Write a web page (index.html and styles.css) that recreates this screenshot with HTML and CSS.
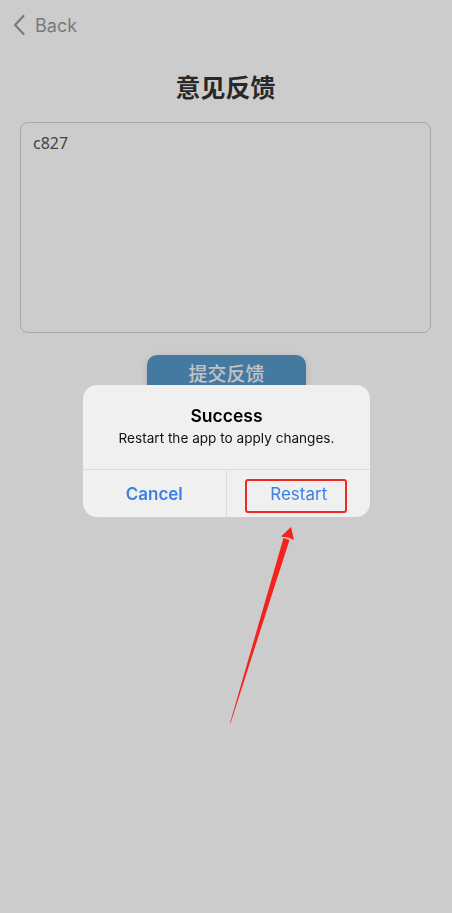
FILE: index.html
```html
<!DOCTYPE html>
<html lang="zh">
<head>
  <meta charset="UTF-8">
  <title>意见反馈</title>
  <link rel="stylesheet" href="styles.css">
</head>
<body>

<div class="page">
  <div class="nav">
    <svg class="nav-chevron" width="14" height="22" viewBox="0 0 14 22">
      <path d="M11.5 2 L3 11 L11.5 20" fill="none" stroke="#999" stroke-width="2.2" stroke-linecap="round" stroke-linejoin="round"/>
    </svg>
    <span class="nav-back">Back</span>
  </div>

  <h1 class="title">意见反馈</h1>

  <div class="feedback-box">
    <span class="feedback-text">c827</span>
  </div>

  <div class="submit-row">
    <button class="submit">提交反馈</button>
  </div>
</div>

<!-- dim layer behind the alert -->
<div class="dim"></div>

<div class="alert">
  <div class="alert-body">
    <div class="alert-title">Success</div>
    <div class="alert-msg">Restart the app to apply changes.</div>
  </div>
  <div class="alert-actions">
    <div class="alert-btn cancel">Cancel</div>
    <div class="alert-btn restart">Restart</div>
  </div>
</div>

<!-- annotation -->
<div class="mark-box"></div>
<svg class="mark-arrow" width="452" height="913" viewBox="0 0 452 913">
  <polygon points="230,723 283.5,538 289.5,540 230.6,723" fill="#f2231c"/>
  <polygon points="291,527 294,540 288,537.5 281,536.5" fill="#f2231c"/>
</svg>

</body>
</html>
```

FILE: styles.css
```css
body {
  margin: 0;
  background: #fff;
  font-family: Inter, "Liberation Sans", "Noto Sans CJK SC", sans-serif;
  width: 452px;
  height: 913px;
  overflow: hidden;
}

.page {
  padding: 0 21px 0 20px;
}

.nav {
  display: flex;
  align-items: center;
  height: 50px;
  margin-left: -8px;
}

.nav-chevron {
  margin-right: 9px;
}

.nav-back {
  font-size: 18px;
  color: #999;
  padding-top: 1px;
}

.title {
  margin: 21px 0 0;
  text-align: center;
  font-family: "Noto Sans CJK SC", sans-serif;
  font-size: 25px;
  font-weight: bold;
  color: #333;
  line-height: 30px;
}

.feedback-box {
  margin-top: 21px;
  border: 1px solid #d3d3d3;
  border-radius: 8px;
  padding: 9px 11px 9px 12px;
  height: 191px;
}

.feedback-text {
  font-family: "Noto Sans", sans-serif;
  font-size: 16px;
  color: #555;
}

.submit-row {
  display: flex;
  justify-content: center;
  margin-top: 22px;
  padding-left: 2px;
}

.submit {
  width: 159px;
  height: 40px;
  border: none;
  border-radius: 10px;
  background: #5698c8;
  color: #f6f6f6;
  font-family: "Noto Sans CJK SC", sans-serif;
  font-size: 19px;
  font-weight: 500;
  line-height: 36px;
  padding: 0 0 4px;
  box-shadow: 0 2px 6px rgba(0, 0, 0, 0.15);
}

.dim {
  position: fixed;
  inset: 0;
  background: rgba(0, 0, 0, 0.2);
}

.alert {
  position: absolute;
  top: 385px;
  left: 83px;
  width: 287px;
  background: #f0f0f0;
  border-radius: 14px;
  overflow: hidden;
  text-align: center;
}

.alert-body {
  padding: 20px 16px 0;
  height: 64px;
  border-bottom: 1px solid #dcdcdc;
}

.alert-title {
  font-size: 17.5px;
  font-weight: 600;
  color: #000;
  line-height: 22px;
}

.alert-msg {
  margin-top: 2px;
  font-size: 13.6px;
  color: #111;
  line-height: 18px;
}

.alert-actions {
  display: flex;
  height: 47px;
}

.alert-btn {
  flex: 1;
  display: flex;
  align-items: center;
  justify-content: center;
  font-size: 17px;
  color: #3b80e8;
}

.cancel {
  font-weight: 600;
  border-right: 1px solid #dcdcdc;
}

.restart {
  padding-left: 1px;
}

.mark-box {
  position: absolute;
  top: 479px;
  left: 245px;
  width: 98px;
  height: 30px;
  border: 2.5px solid #ec2a22;
  border-radius: 3px;
}

.mark-arrow {
  position: absolute;
  top: 0;
  left: 0;
}
```
